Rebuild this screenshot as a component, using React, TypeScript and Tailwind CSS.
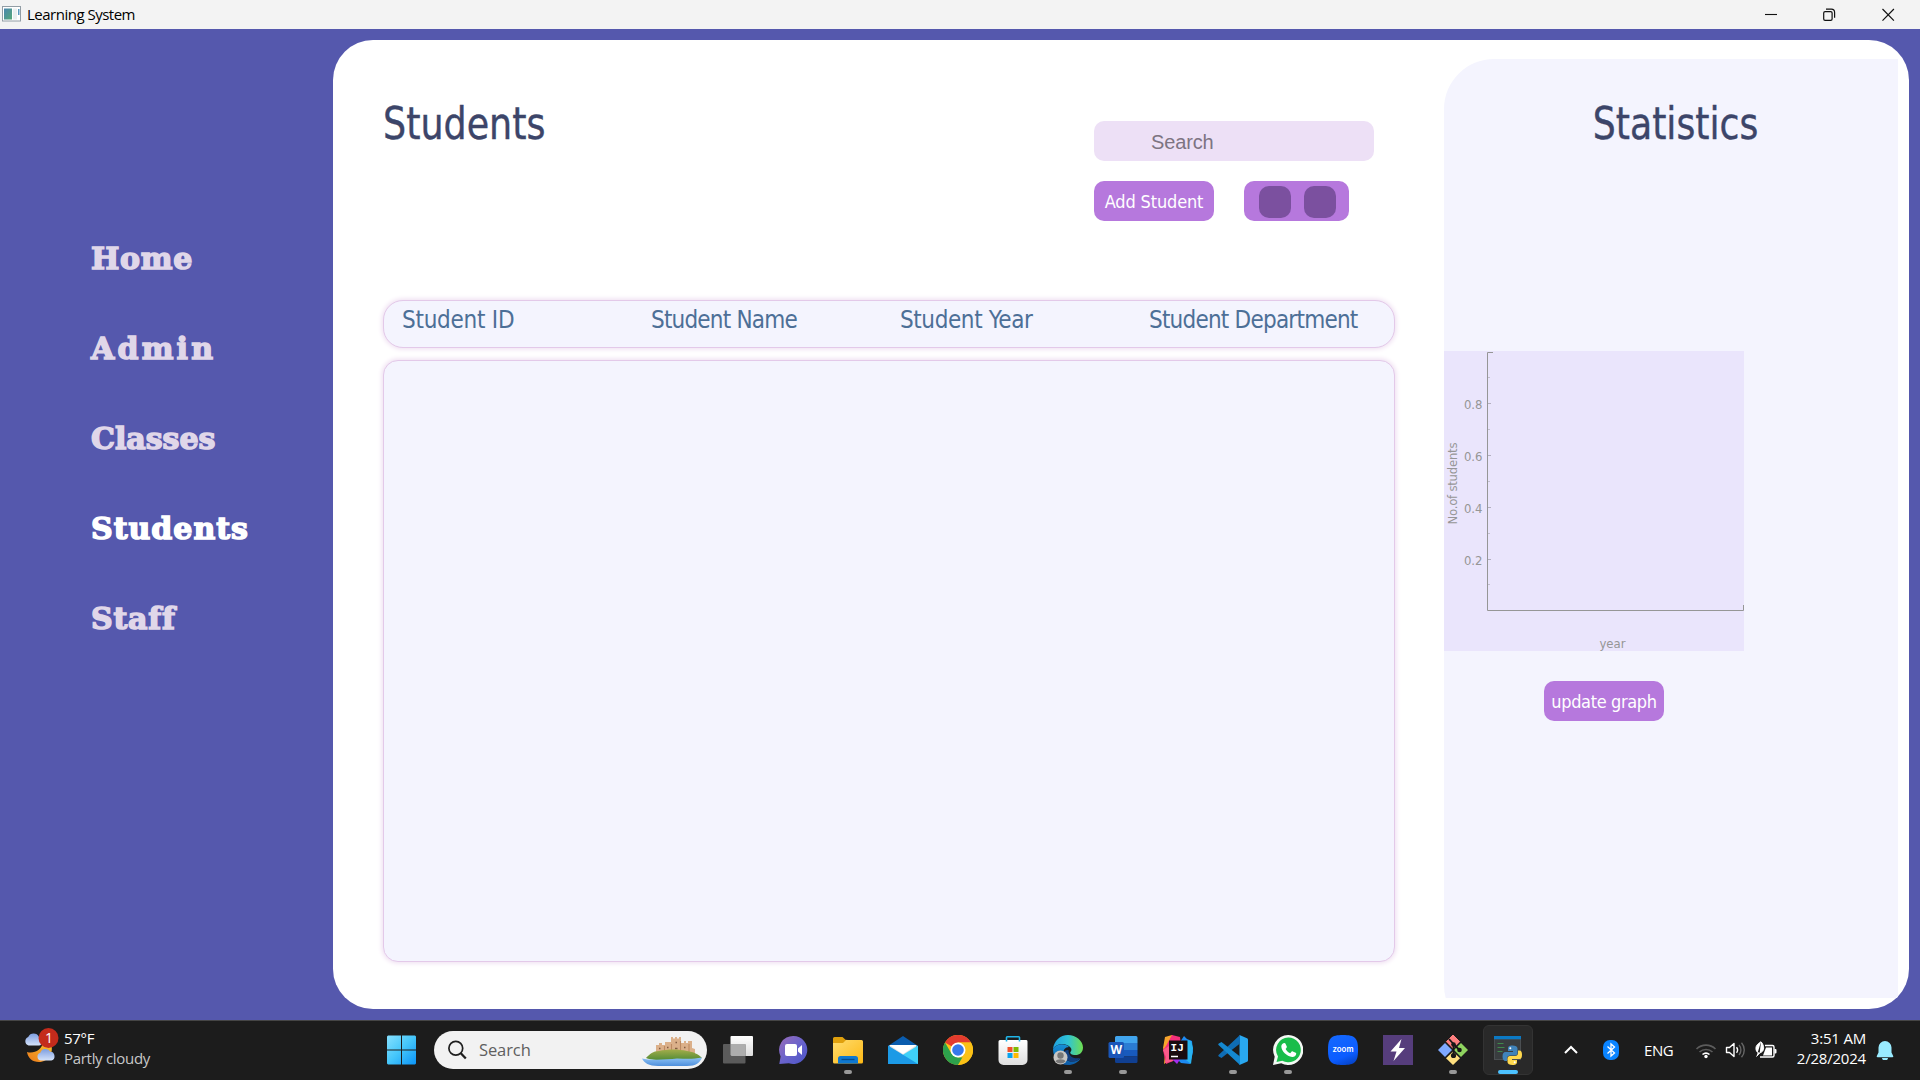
import type { ReactNode } from 'react';

const tahoma = "font-['DejaVu_Sans_Condensed','DejaVu_Sans',sans-serif]";
const segoe = "font-['Open_Sans',sans-serif]";

/* ---------- window chrome ---------- */

function TitleBar() {
  return (
    <header className={`flex h-[29px] items-center bg-[#f3f3f3] pl-0.5 text-black ${segoe}`}>
      <svg width="19" height="16" viewBox="0 0 19 16" className="mt-[-2px]">
        <defs>
          <linearGradient id="appIcon" x1="0" y1="0" x2="1" y2="1">
            <stop offset="0" stopColor="#4a86b0" />
            <stop offset="1" stopColor="#55a878" />
          </linearGradient>
        </defs>
        <rect x="0.5" y="0.5" width="18" height="14.5" fill="#fff" stroke="#929da5" />
        <rect x="2" y="2.5" width="8" height="11" fill="url(#appIcon)" />
        <rect x="11" y="2.5" width="4" height="11" fill="#e9eff0" />
        <rect x="16" y="3" width="1.5" height="6" fill="#5a9ac0" />
      </svg>
      <span className="ml-1.5 text-[15px] leading-[29px] tracking-[-0.5px]">Learning System</span>
      <svg width="130" height="14" viewBox="0 0 130 14" className="ml-auto mr-[25px]" fill="none" stroke="#111">
        <path d="M0 6.5h12" strokeWidth="1.1" />
        <rect x="58.7" y="3.7" width="8.4" height="8.6" rx="1.4" strokeWidth="1.2" />
        <path d="M61 1.2h5.4a3.2 3.2 0 0 1 3.2 3.2v5.4" strokeWidth="1.2" />
        <path d="M117.5 1l11.4 11.6M128.9 1L117.5 12.600" strokeWidth="1.2" />
      </svg>
    </header>
  );
}

/* ---------- sidebar ---------- */

const navItems = [
  { label: 'Home', spacing: 'tracking-[0.7px]' },
  { label: 'Admin', spacing: 'tracking-[3.2px]' },
  { label: 'Classes', spacing: 'tracking-[0px]' },
  { label: 'Students', spacing: 'tracking-[1px]', active: true },
  { label: 'Staff', spacing: 'tracking-[0.8px]' },
];

function Sidebar() {
  return (
    <nav className="flex w-[333px] flex-col pt-[185px] pl-[91px] font-['DejaVu_Serif',serif] text-[30px] font-bold">
      {navItems.map((item) => (
        <a
          key={item.label}
          className={`h-[90px] leading-[90px] ${item.spacing} ${
            item.active
              ? 'text-white [-webkit-text-stroke:1.5px_#ffffff]'
              : 'text-[#e0d7e9] [-webkit-text-stroke:1.5px_#e0d7e9]'
          }`}
        >
          {item.label}
        </a>
      ))}
    </nav>
  );
}

/* ---------- main content ---------- */

const columns = [
  { label: 'Student ID', spacing: 'tracking-[-0.25px]' },
  { label: 'Student Name', spacing: 'tracking-[-0.8px]' },
  { label: 'Student Year', spacing: 'tracking-[-0.4px]' },
  { label: 'Student Department', spacing: 'tracking-[-0.78px]' },
];

function StudentsSection() {
  return (
    <section className="w-[1111px] pl-[50px]">
      <div className="flex h-[260px]">
        <h1 className={`w-[711px] pt-[56px] text-[45px] leading-[56px] text-[#3c4569] [-webkit-text-stroke:0.4px_#3c4569] ${tahoma}`}>
          <span className="inline-block origin-left scale-x-[0.9]">Students</span>
        </h1>
        <div className="pt-[81px]">
          <div className="flex h-10 w-[280px] items-center rounded-[10px] bg-[#ede0f6] pl-[57px] pt-0.5 font-['Liberation_Sans',sans-serif] text-[20px] tracking-[-0.15px] text-[#7d7482]">
            Search
          </div>
          <div className="mt-5 flex gap-[30px]">
            <button className={`h-10 w-[120px] rounded-[10px] bg-[#b678dd] text-[18px] tracking-[-0.15px] text-white ${tahoma}`}>
              Add Student
            </button>
            <div className="flex h-10 w-[105px] items-center gap-[13px] rounded-[10px] bg-[#b678dd] pl-[15px] pt-0.5">
              <span className="size-8 rounded-[10px] bg-[#7b509f]" />
              <span className="size-8 rounded-[10px] bg-[#7b509f]" />
            </div>
          </div>
        </div>
      </div>
      <div className={`grid h-12 w-[1012px] grid-cols-[249px_249px_249px_1fr] rounded-[20px] border border-[#e3c9e9] bg-[#f4f4fe] pl-[18px] text-[24px] leading-[38px] text-[#4d6f97] shadow-[0_0_5px_1px_#eddcf0] ${tahoma}`}>
        {columns.map((c) => (
          <span key={c.label} className={`whitespace-nowrap ${c.spacing}`}>
            {c.label}
          </span>
        ))}
      </div>
      <div className="mt-3 h-[602px] w-[1012px] rounded-[15px] border border-[#e3c9e9] bg-[#f4f4fe] shadow-[0_0_5px_1px_#eddcf0]" />
    </section>
  );
}

const majorTicks = [
  { y: 52.5, label: '0.8' },
  { y: 104.5, label: '0.6' },
  { y: 156.5, label: '0.4' },
  { y: 208.5, label: '0.2' },
];
const minorTicks = [26.5, 78.5, 130.5, 182.5, 233.5];

function Chart() {
  return (
    <svg width="300" height="300" viewBox="0 0 300 300" className={`block bg-[#eae5fc] text-[13px] ${tahoma}`}>
      <path d="M49 1.5h-5.500v258h256v-5.500" fill="none" stroke="#969696" />
      {minorTicks.map((y) => (
        <path key={y} d={`M44 ${y}h2`} stroke="#c3bfd0" />
      ))}
      {majorTicks.map((t) => (
        <g key={t.label}>
          <path d={`M44 ${t.y}h3`} stroke="#b3afc0" />
          <text x="38.500" y={t.y + 5} textAnchor="end" fill="#969696">
            {t.label}
          </text>
        </g>
      ))}
      <text x="168.500" y="297" textAnchor="middle" fill="#969696">
        year
      </text>
      <text transform="translate(13 132.500) rotate(-90)" textAnchor="middle" textLength="82" fill="#969696">
        No.of students
      </text>
    </svg>
  );
}

function StatisticsPanel() {
  return (
    <aside className="mt-[19px] h-[939px] w-[454px] overflow-hidden">
      <div className="h-[976px] rounded-l-[50px] bg-[#f4f4fe]">
        <h1 className={`flex h-[292px] justify-center pt-[37px] pl-[9px] text-[45px] leading-[56px] text-[#3c4569] [-webkit-text-stroke:0.4px_#3c4569] ${tahoma}`}>
          <span className="inline-block h-[56px] scale-x-[0.895]">Statistics</span>
        </h1>
        <Chart />
        <button className={`ml-[100px] mt-[30px] h-10 w-[120px] rounded-[10px] bg-[#b678dd] text-[18px] tracking-[-0.35px] text-white ${tahoma}`}>
          update graph
        </button>
      </div>
    </aside>
  );
}

/* ---------- taskbar icons ---------- */

function Icon({ children, size = 30 }: { children: ReactNode; size?: number }) {
  return (
    <svg width={size} height={size} viewBox="0 0 30 30">
      {children}
    </svg>
  );
}

const StartIcon = () => (
  <Icon>
    <defs>
      <linearGradient id="win" gradientUnits="userSpaceOnUse" x1="0" y1="0" x2="30" y2="30">
        <stop offset="0" stopColor="#8ae2ff" />
        <stop offset="0.5" stopColor="#45c6fa" />
        <stop offset="1" stopColor="#0a93f8" />
      </linearGradient>
    </defs>
    <g fill="url(#win)">
      <path d="M2 .5H15V14.500H1V1.500zM16 .5h13l1 1v13H16zM1 15.500H15V29.500H2l-1-1zM16 15.500h14v13l-1 1H16z" />
    </g>
  </Icon>
);

const TaskViewIcon = () => (
  <Icon>
    <defs>
      <linearGradient id="tvBack" x1="0" y1="0" x2="0" y2="1">
        <stop offset="0" stopColor="#fff" />
        <stop offset="1" stopColor="#dcdcdc" />
      </linearGradient>
    </defs>
    <rect x="7.500" y="1" width="22.500" height="20" rx="1" fill="url(#tvBack)" />
    <rect x="0" y="9" width="22.500" height="19.500" rx="1" fill="#5b5b5b" />
    <path d="M7.500 9H22.500V21H8.500l-1-1z" fill="#adadad" />
  </Icon>
);

const ChatIcon = () => (
  <Icon>
    <defs>
      <linearGradient id="chat" x1="0" y1="0" x2="1" y2="1">
        <stop offset="0" stopColor="#9a6bb8" />
        <stop offset="0.5" stopColor="#6a63cc" />
        <stop offset="1" stopColor="#4b55c8" />
      </linearGradient>
    </defs>
    <path d="M15.500 1a14 14 0 1 1-4.600 27.300L1.300 29l1.300-7.600A14 14 0 0 1 15.500 1z" fill="url(#chat)" />
    <rect x="7" y="9" width="12" height="12" rx="2" fill="#fff" />
    <path d="M20 13.500l4-3.500v10l-4-3.500z" fill="#fff" />
  </Icon>
);

const ExplorerIcon = () => (
  <Icon>
    <defs>
      <linearGradient id="folder" x1="0" y1="0" x2="1" y2="1">
        <stop offset="0" stopColor="#ffdc6e" />
        <stop offset="1" stopColor="#fdb814" />
      </linearGradient>
    </defs>
    <path d="M0 3.500A1.500 1.500 0 0 1 1.500 2H9.500L12.500 4.800 15 5v6H0z" fill="#e0a00d" />
    <path d="M0 8h10l3-3H28.500A1.500 1.500 0 0 1 30 6.500V27a1.500 1.500 0 0 1-1.500 1.500h-27A1.500 1.500 0 0 1 0 27z" fill="url(#folder)" />
    <path d="M5 28.500V23.500a2.500 2.500 0 0 1 2.500-2.500h15a2.500 2.500 0 0 1 2.500 2.500v5z" fill="#0f78d0" />
    <path d="M8.500 24.500h13" stroke="#064c8e" strokeWidth="1.300" />
  </Icon>
);

const MailIcon = () => (
  <Icon>
    <path d="M0 11L15 1l15 10v9H0z" fill="#0a5cae" />
    <path d="M1.500 10h27v9L15 24 1.500 19z" fill="#e4e4e4" />
    <path d="M1.500 10h27L15 19z" fill="#fff" />
    <path d="M30 10.500V29H0z" fill="#3fd0f8" />
    <path d="M0 10.500L30 29H0z" fill="#1c9ae6" />
  </Icon>
);

const ChromeIcon = () => (
  <Icon>
    <circle cx="15" cy="15" r="15" fill="#fbc116" />
    <path d="M28 7.500H15L8.500 11.200 2 7.500A15 15 0 0 1 28 7.500z" fill="#e33b2e" />
    <path d="M2 7.500L8.500 18.800 15 22.500H21.500L15 30A15 15 0 0 1 2 7.500z" fill="#2da14c" />
    <path d="M21.500 18.800L15 30a15 15 0 0 0 13-22.500H15z" fill="#fbc116" />
    <circle cx="15" cy="15" r="7.500" fill="#fff" />
    <circle cx="15" cy="15" r="5.800" fill="#3779ea" />
  </Icon>
);

const StoreIcon = () => (
  <Icon>
    <defs>
      <linearGradient id="bag" x1="0" y1="0" x2="0" y2="1">
        <stop offset="0" stopColor="#fff" />
        <stop offset="1" stopColor="#dedede" />
      </linearGradient>
    </defs>
    <path d="M.5 6.500A1.500 1.500 0 0 1 2 5H28a1.500 1.500 0 0 1 1.500 1.500V25a5 5 0 0 1-5 5h-19a5 5 0 0 1-5-5z" fill="url(#bag)" />
    <path d="M8.500 6.500V2.500A.8.8 0 0 1 9.300 1.700H20.700a.8.8 0 0 1 .8.8V6.500" fill="none" stroke="#20b5e8" strokeWidth="1.600" />
    <rect x="9.500" y="12" width="5" height="5" fill="#f0502a" />
    <rect x="15.500" y="12" width="5" height="5" fill="#7fba00" />
    <rect x="9.500" y="18" width="5" height="5" fill="#08a3ee" />
    <rect x="15.500" y="18" width="5" height="5" fill="#ffb900" />
  </Icon>
);

const EdgeIcon = () => (
  <Icon>
    <defs>
      <linearGradient id="edgeTop" x1="0" y1="0.500" x2="1" y2="0.500">
        <stop offset="0" stopColor="#1fa0e0" />
        <stop offset="0.500" stopColor="#2fc3d6" />
        <stop offset="1" stopColor="#6fdf4f" />
      </linearGradient>
      <linearGradient id="edgeSide" x1="0" y1="0" x2="0" y2="1">
        <stop offset="0" stopColor="#1691d8" />
        <stop offset="1" stopColor="#0c59a4" />
      </linearGradient>
    </defs>
    <path d="M0 14C1 6 7 0 15 0s15 6 15 12.500c0 5-3.500 7.500-7.500 7.500-4 0-6-1.500-5-3 1-1.500 1.500-2.500 0-4.500C14 8 4 7 0 14z" fill="url(#edgeTop)" />
    <path d="M0 14C3 8 13 8 16 12c-4 0-6 3-5.500 7 .5 5 5 8 9 7.500 4 0 6-2 8-3-2.500 4-7 6.500-12.500 6.500C6 30 0 23 0 14z" fill="url(#edgeSide)" />
    <path d="M10.500 19c.5 5 5 8 10 7.500 3.500-.5 5-2 7-3.500-4 1-12 .5-12-8-3 0-5 1-5 4z" fill="#123f80" />
    <circle cx="7.500" cy="22.500" r="7" fill="#c8c6c4" />
    <circle cx="7.500" cy="20.500" r="3.200" fill="#777" />
    <path d="M2.500 26.500c1-3 9-3 10 0a7 7 0 0 1-10 0z" fill="#777" />
  </Icon>
);

const WordIcon = () => (
  <Icon>
    <path d="M7 2.500A1.500 1.500 0 0 1 8.500 1H28a1.500 1.500 0 0 1 1.500 1.500V8H7z" fill="#41a5ee" />
    <path d="M7 8h22.500v7H7z" fill="#2b7cd3" />
    <path d="M7 15h22.500v6.500H7z" fill="#185abd" />
    <path d="M7 21.500h22.500v5A1.500 1.500 0 0 1 28 28H8.500A1.500 1.500 0 0 1 7 26.500z" fill="#103f91" />
    <rect x="0.500" y="7" width="15.500" height="16" rx="1.500" fill="#1a56b8" />
    <text x="8.200" y="19" textAnchor="middle" fill="#fff" className="font-['Open_Sans',sans-serif] text-[12px] font-bold">
      W
    </text>
  </Icon>
);

const IntelliJIcon = () => (
  <Icon>
    <path d="M2 2L9 0l5 6L8 24l-7 5 1-10-2-6z" fill="#f7a42c" />
    <path d="M3 11L9 0l8 2 2 16-9 8-7 3L0 15z" fill="#f5307a" />
    <path d="M0 15l6-4 4 15-8 2 1-6z" fill="#fb5a8b" />
    <path d="M17 7l4-6 3 3 5 2 1 11-3 12-9-1-4-4z" fill="#1c8af2" />
    <path d="M24 5l4 1 2 7-2 16-5-4z" fill="#28b3f0" />
    <path d="M9 24l9-1-4 6z" fill="#a32df0" />
    <rect x="6" y="5.500" width="18.500" height="19" fill="#190b10" />
    <text x="7.600" y="15.500" fill="#fff" className="font-['Liberation_Mono',monospace] text-[11px] font-bold">
      IJ
    </text>
    <path d="M8 21.500h7" stroke="#fff" strokeWidth="1.500" />
  </Icon>
);

const VSCodeIcon = () => (
  <Icon>
    <path d="M21.500 0L29 3.300a1.500 1.500 0 0 1 1 1.400V25.300a1.500 1.500 0 0 1-1 1.400L21.500 30z" fill="#29a8f0" />
    <path d="M22 0v8.500L3.500 23 .8 21.400a1 1 0 0 1 0-1.600z" fill="#0f6db5" />
    <path d="M22 30v-8.500L3.500 7 .8 8.600a1 1 0 0 0 0 1.600z" fill="#1488d0" />
  </Icon>
);

const WhatsAppIcon = () => (
  <Icon>
    <path d="M15 0a15 15 0 1 1-6.800 28.200L0 30l1.700-8.200A15 15 0 0 1 15 0z" fill="#f4f8f4" />
    <path d="M15.300 2.500a12.400 12.400 0 1 1-6 23.200L3.500 27l1.500-5.600A12.400 12.400 0 0 1 15.300 2.500z" fill="#19bd4a" />
    <path d="M10.500 8.200c.6-.4 1.500-.4 1.900.3l1.400 3c.2.500 0 1-.4 1.500l-.8 1c1 2 2.500 3.300 4.600 4.200l1.300-1.500c.3-.4.8-.5 1.300-.3l2.900 1.400c.5.300.6.700.5 1.200-.3 2-2.200 3-4 2.900-5.600-.6-10.700-5.600-10.900-10.400 0-1.400.9-2.700 2.200-3.300z" fill="#fff" />
  </Icon>
);

const ZoomIcon = () => (
  <Icon>
    <defs>
      <linearGradient id="zoomBg" x1="0.300" y1="0" x2="0.700" y2="1">
        <stop offset="0" stopColor="#1468ff" />
        <stop offset="0.700" stopColor="#0b5cff" />
        <stop offset="1" stopColor="#0644c8" />
      </linearGradient>
    </defs>
    <path d="M15 0c12 0 15 3 15 15s-3 15-15 15S0 27 0 15 3 0 15 0z" fill="url(#zoomBg)" />
    <text x="15" y="17.300" textAnchor="middle" textLength="21" lengthAdjust="spacingAndGlyphs" fill="#fff" className="font-['Inter',sans-serif] text-[8px] font-semibold">
      zoom
    </text>
  </Icon>
);

const BoltIcon = () => (
  <Icon>
    <path d="M0 0h30v30H0z" fill="#563d7c" />
    <path d="M18.500 4L7.500 16.500h6l-3 9.500L22 13h-6z" fill="#fff" />
  </Icon>
);

const GitIcon = () => (
  <Icon>
    <path d="M15 0l6.600 6.600-6.600 6.700-6.600-6.700z" fill="#ff8080" stroke="#ff8080" strokeLinejoin="round" />
    <path d="M23 8l7 7-7 7-7-7z" fill="#8fd45f" />
    <path d="M7 8l7 7-7 7-7-7z" fill="#7fa9ff" />
    <path d="M15 16.500l7 6.700-7 6.800-7-6.800z" fill="#ffe080" />
    <path d="M11 4l4.500 5v11M15.500 9l6 6" stroke="#171717" strokeWidth="1.800" fill="none" />
    <circle cx="15.500" cy="9.500" r="2.300" fill="#171717" />
    <circle cx="21.500" cy="15" r="2.300" fill="#171717" />
    <circle cx="15.500" cy="20.500" r="2.600" fill="#171717" />
  </Icon>
);

const PythonIcon = () => (
  <Icon>
    <rect x="1" y="1" width="27" height="24" fill="#4b4f52" />
    <rect x="2" y="4.500" width="25" height="19.500" fill="#393d3f" />
    <rect x="1" y="1" width="27" height="3.200" fill="#0b79c4" />
    <path d="M4.500 8.500h6M4.500 12.500h7M4.500 16.500h5" stroke="#3f8a4b" strokeWidth="1.200" />
    <path d="M19.500 10.500c-4 0-4.500 1.500-4.500 3V16h5v1h-7.500c-2 0-3 1.700-3 4.500s1.200 4.500 3 4.500H14v-2.500c0-2 1.500-3 3-3h5c1.500 0 2.500-1 2.500-2.500v-4.500c0-1.800-2-3-5-3z" fill="#3f83ba" />
    <path d="M19.500 30c4 0 4.500-1.500 4.500-3v-2h-5v-1h7.500c2 0 2.500-2 2.500-4.500s-1-4-2.500-4H25V18c0 2-1.300 3-3 3h-5c-1.500 0-2.500 1-2.500 2.500V27c0 2 2 3 5 3z" fill="#ffd94e" />
    <circle cx="17.300" cy="13.200" r="1" fill="#fff" />
    <circle cx="21.700" cy="27.300" r="1" fill="#fff" />
  </Icon>
);

const CastleArt = () => (
  <svg width="60" height="30" viewBox="0 0 60 30">
    <defs>
      <linearGradient id="hill" x1="0" y1="0" x2="0" y2="1">
        <stop offset="0" stopColor="#a3ad4a" />
        <stop offset="1" stopColor="#4f8a35" />
      </linearGradient>
      <linearGradient id="sea" x1="0" y1="0" x2="0" y2="1">
        <stop offset="0" stopColor="#8ec3f5" />
        <stop offset="1" stopColor="#4e8fdc" />
      </linearGradient>
    </defs>
    <path d="M14 17V9h3V7h3v2h3V6h6V1h2v1.500h2V1h2v1.500h2V1h2v6h3V5h2v2h2V5h4v7l3 1v5z" fill="#dbb08a" />
    <path d="M38.500 5v10M22.500 10v7M47 8v9M29.500 8v8" stroke="#bd8a62" strokeWidth="1.100" />
    <path d="M17 12.500h1.500M25 11.500h1.500M33.500 6.500h1.500M42 11.500h1.500M33 12.500h2.500" stroke="#835c42" strokeWidth="1.500" />
    <path d="M4 22c4-4 7-7 13-7 8-2 20-2 28 0 7 1 11 3 15 7-6 3-46 4-56 0z" fill="url(#hill)" />
    <path d="M0 22.500c8 2 25 1 35 0 8 0 15 1 25-1-2 5-6 8.500-15 8.500H16C7 30 2 27 0 22.500z" fill="url(#sea)" />
  </svg>
);

const WeatherIcon = () => (
  <svg width="35" height="36" viewBox="0 0 35 36">
    <defs>
      <linearGradient id="moon" x1="1" y1="0" x2="0" y2="1">
        <stop offset="0" stopColor="#f9c22e" />
        <stop offset="1" stopColor="#ec7a1c" />
      </linearGradient>
      <linearGradient id="cloud" x1="0" y1="0" x2="0" y2="1">
        <stop offset="0" stopColor="#7d9ee0" />
        <stop offset="1" stopColor="#d5e3fa" />
      </linearGradient>
    </defs>
    <path d="M3 24c7 2 15-2 16-10l8 2c3 8-2 18-12 18C8 34 4 30 3 24z" fill="url(#moon)" />
    <path d="M4.500 17.500a4.500 4.500 0 0 1-.3-8.500A6 6 0 0 1 15 9c4 .5 4 8.500 0 8.500z" fill="url(#cloud)" />
    <path d="M16.500 32.500a4 4 0 0 1-.2-7.700 5.500 5.500 0 0 1 10-1c5-.5 6 8.500 1 8.700z" fill="url(#cloud)" />
    <circle cx="24.500" cy="10" r="10" fill="#c42b1c" />
    <text x="25" y="15" textAnchor="middle" fill="#fff" className="font-['Open_Sans',sans-serif] text-[14px]">
      1
    </text>
  </svg>
);

/* ---------- taskbar ---------- */

const apps: { name: string; icon: ReactNode; state?: 'open' | 'active' }[] = [
  { name: 'Task view', icon: <TaskViewIcon /> },
  { name: 'Chat', icon: <ChatIcon /> },
  { name: 'File Explorer', icon: <ExplorerIcon />, state: 'open' },
  { name: 'Mail', icon: <MailIcon /> },
  { name: 'Chrome', icon: <ChromeIcon /> },
  { name: 'Store', icon: <StoreIcon /> },
  { name: 'Edge', icon: <EdgeIcon />, state: 'open' },
  { name: 'Word', icon: <WordIcon />, state: 'open' },
  { name: 'IntelliJ', icon: <IntelliJIcon /> },
  { name: 'VS Code', icon: <VSCodeIcon />, state: 'open' },
  { name: 'WhatsApp', icon: <WhatsAppIcon />, state: 'open' },
  { name: 'Zoom', icon: <ZoomIcon /> },
  { name: 'Bolt', icon: <BoltIcon /> },
  { name: 'Git', icon: <GitIcon />, state: 'open' },
  { name: 'Python', icon: <PythonIcon />, state: 'active' },
];

function TaskbarApp({ icon, state }: { icon: ReactNode; state?: 'open' | 'active' }) {
  return (
    <div className="flex w-[55px] shrink-0 justify-center">
      <div
        className={`flex h-[50px] w-[50px] flex-col items-center rounded-md border ${
          state === 'active' ? 'border-[#333333] bg-[#292929]' : 'border-transparent'
        } pt-[9px]`}
      >
        {icon}
        {state === 'open' && <span className="mt-[5px] h-1 w-2 rounded-full bg-[#989898]" />}
        {state === 'active' && <span className="mt-[5px] h-1 w-5 rounded-full bg-[#4cc2ff]" />}
      </div>
    </div>
  );
}

function SystemTray() {
  return (
    <div className="flex h-full flex-1 items-center text-white">
      <svg width="14" height="10" viewBox="0 0 14 10" className="ml-[28.500px]" fill="none" stroke="#fff" strokeWidth="2">
        <path d="M1 8l6-6 6 6" />
      </svg>
      <svg width="16" height="20" viewBox="0 0 16 20" className="ml-[25px]">
        <rect width="16" height="20" rx="7" fill="#0a84ff" />
        <path d="M4.500 6.500l7 6.500L8 16V4l3.500 3-7 6.500" fill="none" stroke="#fff" strokeWidth="1.300" />
      </svg>
      <span className="ml-[25px] w-[30px] text-[15px] tracking-[-0.4px]">ENG</span>
      <svg width="22" height="18" viewBox="0 0 22 18" className="ml-[21px]" fill="none" strokeWidth="1.600">
        <path d="M1.500 8a13.500 13.500 0 0 1 19 0M4.500 11a9.500 9.500 0 0 1 13 0" stroke="#5c5c5c" />
        <path d="M7.500 13.500a5.500 5.500 0 0 1 7 0" stroke="#fff" />
        <circle cx="11" cy="15.500" r="1.700" fill="#fff" />
      </svg>
      <svg width="22" height="18" viewBox="0 0 22 18" className="ml-2" fill="none" strokeWidth="1.400">
        <path d="M1.500 6.500h3L9 2.500v13l-4.500-4h-3z" stroke="#fff" strokeLinejoin="round" />
        <path d="M11.500 6.200a4.500 4.500 0 0 1 0 5.600" stroke="#fff" />
        <path d="M14 4a7.500 7.500 0 0 1 0 10M16.500 1.700a11 11 0 0 1 0 14.600" stroke="#666" />
      </svg>
      <svg width="22" height="18" viewBox="0 0 22 18" className="ml-2">
        <path d="M10 4.500h7.500a1.500 1.500 0 0 1 1.500 1.500v8.500a1.500 1.500 0 0 1-1.500 1.500H5" fill="none" stroke="#fff" strokeWidth="1.400" />
        <path d="M19.500 8h1a1 1 0 0 1 1 1v2.500a1 1 0 0 1-1 1h-1zM11 6.500h6v8H8z" fill="#fff" />
        <path d="M6 .8C2 3 .5 5.500 1 8.500c.5 2.500 2 3.500 3.700 3.500L1.500 15.500M6 .8c3 3 4.500 9.500-1.300 11.200" fill="#fff" stroke="#fff" />
      </svg>
      <div className="ml-[11px] mb-1 w-[78px] text-right text-[15px] leading-5 tracking-[-0.2px]">
        <div>3:51 AM</div>
        <div>2/28/2024</div>
      </div>
      <svg width="18" height="20" viewBox="0 0 18 20" className="ml-2.5" fill="#99ebff">
        <path d="M9 1a6.500 6.500 0 0 1 6.500 6.500v5L17.200 16a.8.8 0 0 1-.7 1.200h-15A.8.8 0 0 1 .8 16l1.700-3.500v-5A6.500 6.500 0 0 1 9 1zM6 18h6a3 2.300 0 0 1-6 0z" />
      </svg>
    </div>
  );
}

function Taskbar() {
  return (
    <footer className={`flex h-[60px] items-center border-t border-[#454545] bg-[#1c1c1c] pb-px ${segoe}`}>
      <div className="flex w-[386px] items-start pb-1 pl-[24px]">
        <WeatherIcon />
        <div className="ml-[5px] text-[15px] leading-5 tracking-[-0.3px]">
          <div className="text-white">57°F</div>
          <div className="text-[#c8c8c8]">Partly cloudy</div>
        </div>
      </div>
      <StartIcon />
      <div className="ml-[18px] flex h-[38px] w-[273px] items-center rounded-full bg-[#f2f2f2] pl-[13px]">
        <svg width="20" height="20" viewBox="0 0 20 20" fill="none" stroke="#1f1f1f">
          <circle cx="8.800" cy="8.300" r="6.900" strokeWidth="1.700" />
          <path d="M13.800 13.300l5 5.200" strokeWidth="2.300" />
        </svg>
        <span className="ml-3 text-[16.500px] tracking-[-0.1px] text-[#5f5f5f]">Search</span>
        <span className="ml-auto mr-[5px] mt-0.5">
          <CastleArt />
        </span>
      </div>
      <div className="ml-[3.500px] flex">
        {apps.map((a) => (
          <TaskbarApp key={a.name} icon={a.icon} state={a.state} />
        ))}
      </div>
      <SystemTray />
    </footer>
  );
}

export default function App() {
  return (
    <div className="flex h-[1080px] w-[1920px] flex-col overflow-hidden">
      <TitleBar />
      <div className="flex h-[991px] bg-[#5558ad]">
        <Sidebar />
        <main className="mt-[11px] flex h-[969px] w-[1576px] overflow-hidden rounded-[40px] bg-white">
          <StudentsSection />
          <StatisticsPanel />
        </main>
      </div>
      <Taskbar />
    </div>
  );
}
